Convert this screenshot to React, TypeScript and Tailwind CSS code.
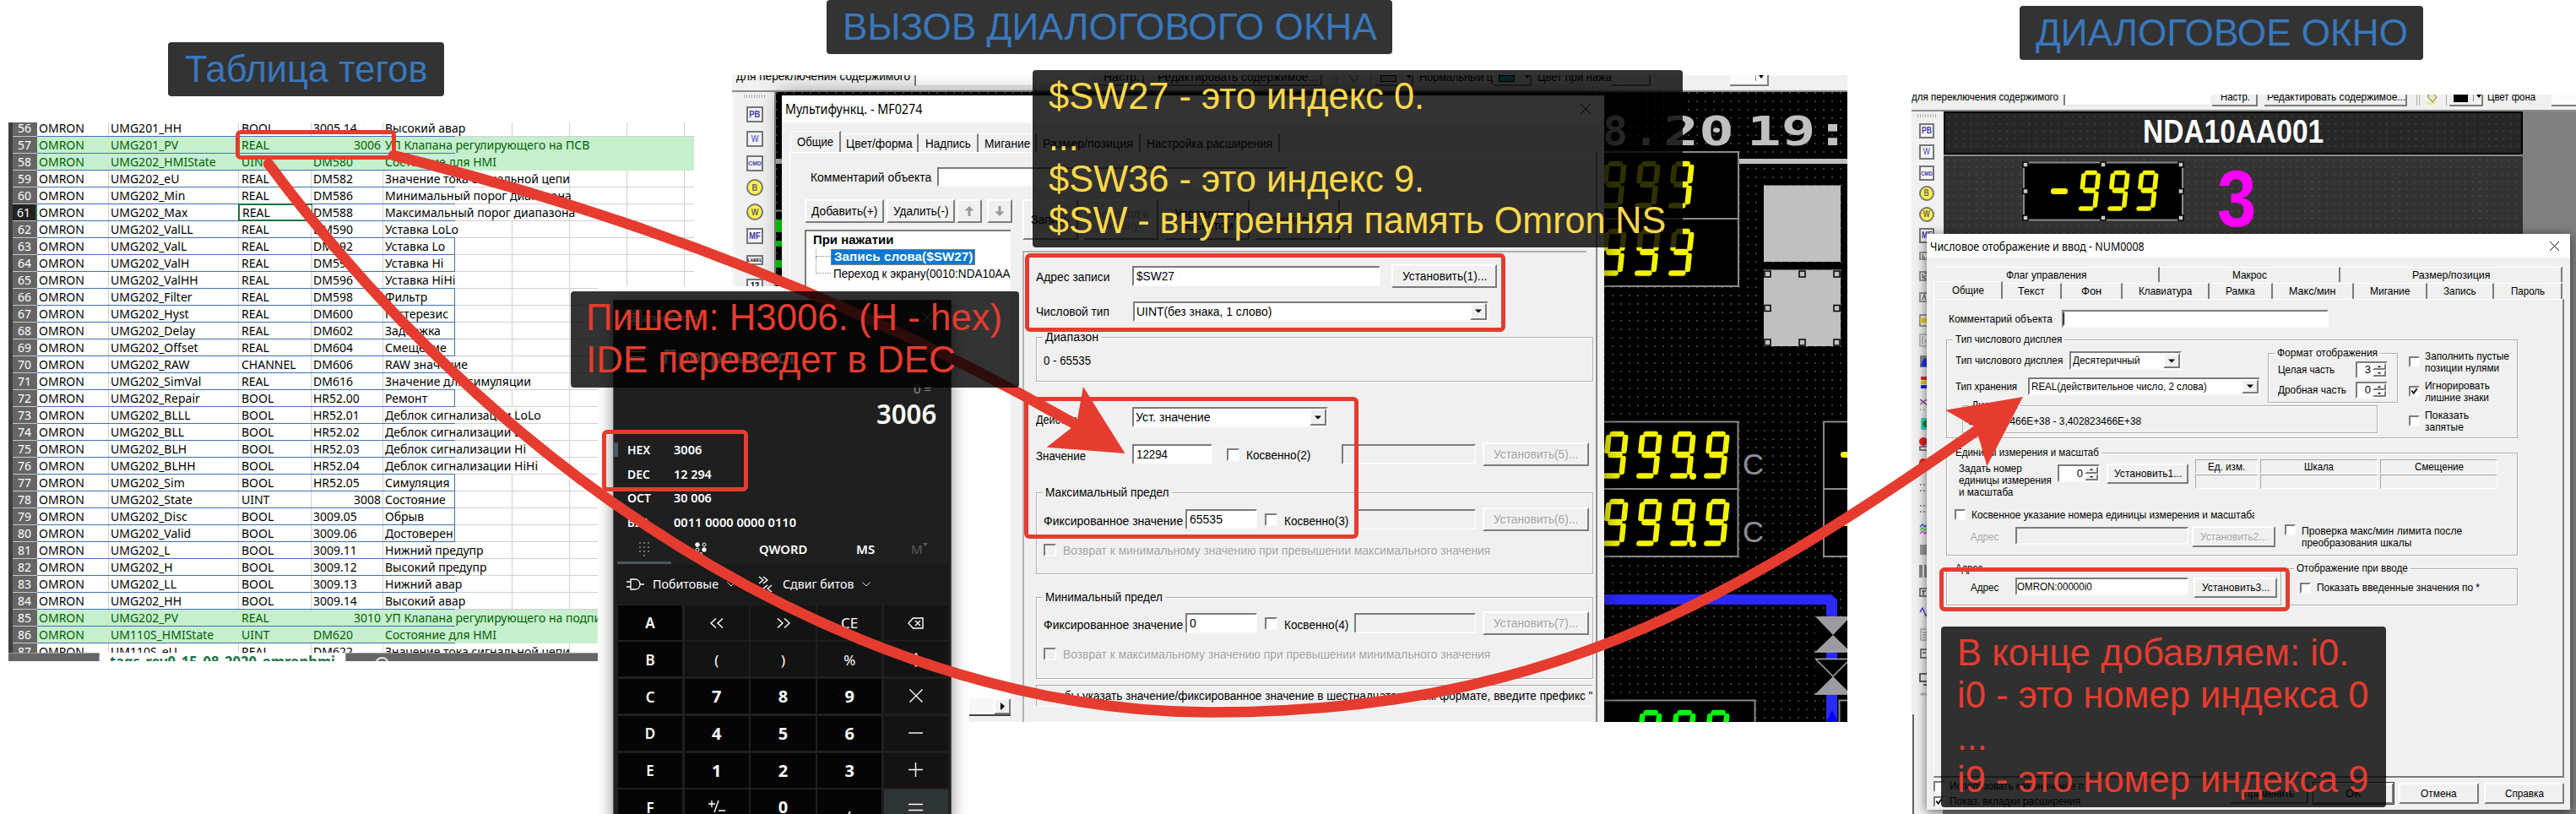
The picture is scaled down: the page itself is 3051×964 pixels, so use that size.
import React, { useLayoutEffect, useRef, useState } from "react";

const cx = (...a: (string | false | undefined)[]) => a.filter(Boolean).join(" ");

/* One line of text condensed or widened to the width of its box. */
function Fit({ c, children }: { c: string; children: React.ReactNode }) {
  const outer = useRef<HTMLSpanElement>(null);
  const inner = useRef<HTMLSpanElement>(null);
  const [k, setK] = useState(1);
  useLayoutEffect(() => {
    if (outer.current && inner.current && inner.current.offsetWidth > 0) {
      setK(outer.current.clientWidth / inner.current.offsetWidth);
    }
  }, []);
  return (
    <span ref={outer} className={cx("block shrink-0 whitespace-nowrap", c)}>
      <span ref={inner} className="inline-block origin-left" style={{ transform: `scaleX(${k})` }}>
        {children}
      </span>
    </span>
  );
}

const sunken =
  "border-2 border-t-[#7c7c7c] border-l-[#7c7c7c] border-r-[#fbfbfb] border-b-[#fbfbfb] shrink-0 flex items-center";
const raised =
  "border-2 border-t-white border-l-white border-r-[#7c7c7c] border-b-[#7c7c7c] bg-[#f0f0f0] shrink-0 flex items-center justify-center";
const disabledText = "text-[#a0a0a0] [text-shadow:1px_1px_0_#fff]";

function Field({ c, off, children }: { c: string; off?: boolean; children?: React.ReactNode }) {
  return <div className={cx(sunken, off ? "bg-[#f0f0f0]" : "bg-white", "pl-[3px]", c)}>{children}</div>;
}
function Btn({ c, off, children }: { c: string; off?: boolean; children?: React.ReactNode }) {
  return <div className={cx(raised, off && disabledText, c)}>{children}</div>;
}
function Select({ c, children }: { c: string; children?: React.ReactNode }) {
  return (
    <div className={cx(sunken, "justify-between bg-white pl-[2px]", c)}>
      {children}
      <div className={cx(raised, "h-full w-[20px]")}>
        <svg viewBox="0 0 8 4" className="h-[5px] w-[8px]"><path d="M0 0h8l-4 4z" fill="#000" /></svg>
      </div>
    </div>
  );
}
function Chk({ c, on, off }: { c: string; on?: boolean; off?: boolean }) {
  return (
    <div className={cx(sunken, "justify-center", off ? "bg-[#f0f0f0]" : "bg-white", c)}>
      {on && (
        <svg viewBox="0 0 10 10" className="size-full"><path d="M1.5 4l2.5 3.5L8.500 1.500" fill="none" stroke="#000" strokeWidth="2" /></svg>
      )}
    </div>
  );
}
function Group({ c, legend, children }: { c: string; legend: React.ReactNode; children?: React.ReactNode }) {
  return (
    <fieldset className={cx("shrink-0 border border-[#adadad] shadow-[inset_1px_1px_0_#fff,1px_1px_0_#fff]", c)}>
      <legend className="ml-[7px] h-[14px] px-[3px] leading-[14px]">{legend}</legend>
      {children}
    </fieldset>
  );
}
function Spin({ c, v }: { c: string; v: string }) {
  return (
    <div className={cx(sunken, "justify-end bg-white", c)}>
      <span className="mr-[2px]">{v}</span>
      <div className="flex h-full w-[16px] flex-col">
        <div className={cx(raised, "h-1/2 border")}><svg viewBox="0 0 4 2" className="h-[2px] w-[4px]"><path d="M0 2h4L2 0z" /></svg></div>
        <div className={cx(raised, "h-1/2 border")}><svg viewBox="0 0 4 2" className="h-[2px] w-[4px]"><path d="M0 0h4L2 2z" /></svg></div>
      </div>
    </div>
  );
}
function Note({ c, children }: { c: string; children: React.ReactNode }) {
  return <div className={cx("absolute rounded-[4px] bg-black/80 text-[45px]", c)}>{children}</div>;
}

/* ------------------------------------------------------------------ table */
type Row = [number, string, string, string, string];
const rows: Row[] = [
  [56, "UMG201_HH", "BOOL", "3005.14", "Высокий авар"],
  [57, "UMG201_PV", "REAL", "3006", "УП Клапана регулирующего на ПСВ"],
  [58, "UMG202_HMIState", "UINT", "DM580", "Состояние для HMI"],
  [59, "UMG202_eU", "REAL", "DM582", "Значение тока сигнальной цепи"],
  [60, "UMG202_Min", "REAL", "DM586", "Минимальный порог диапазона"],
  [61, "UMG202_Max", "REAL", "DM588", "Максимальный порог диапазона"],
  [62, "UMG202_ValLL", "REAL", "DM590", "Уставка LoLo"],
  [63, "UMG202_ValL", "REAL", "DM592", "Уставка Lo"],
  [64, "UMG202_ValH", "REAL", "DM594", "Уставка Hi"],
  [65, "UMG202_ValHH", "REAL", "DM596", "Уставка HiHi"],
  [66, "UMG202_Filter", "REAL", "DM598", "Фильтр"],
  [67, "UMG202_Hyst", "REAL", "DM600", "Гистерезис"],
  [68, "UMG202_Delay", "REAL", "DM602", "Задержка"],
  [69, "UMG202_Offset", "REAL", "DM604", "Смещение"],
  [70, "UMG202_RAW", "CHANNEL", "DM606", "RAW значение"],
  [71, "UMG202_SimVal", "REAL", "DM616", "Значение для симуляции"],
  [72, "UMG202_Repair", "BOOL", "HR52.00", "Ремонт"],
  [73, "UMG202_BLLL", "BOOL", "HR52.01", "Деблок сигнализации LoLo"],
  [74, "UMG202_BLL", "BOOL", "HR52.02", "Деблок сигнализации Lo"],
  [75, "UMG202_BLH", "BOOL", "HR52.03", "Деблок сигнализации Hi"],
  [76, "UMG202_BLHH", "BOOL", "HR52.04", "Деблок сигнализации HiHi"],
  [77, "UMG202_Sim", "BOOL", "HR52.05", "Симуляция"],
  [78, "UMG202_State", "UINT", "3008", "Состояние"],
  [79, "UMG202_Disc", "BOOL", "3009.05", "Обрыв"],
  [80, "UMG202_Valid", "BOOL", "3009.06", "Достоверен"],
  [81, "UMG202_L", "BOOL", "3009.11", "Нижний предупр"],
  [82, "UMG202_H", "BOOL", "3009.12", "Высокий предупр"],
  [83, "UMG202_LL", "BOOL", "3009.13", "Нижний авар"],
  [84, "UMG202_HH", "BOOL", "3009.14", "Высокий авар"],
  [85, "UMG202_PV", "REAL", "3010", "УП Клапана регулирующего на подпи"],
  [86, "UM110S_HMIState", "UINT", "DM620", "Состояние для HMI"],
  [87, "UM110S_eU", "REAL", "DM622", "Значение тока сигнальной цепи"],
];
const green = [57, 58, 85, 86];
const closed = [63, 64, 66, 67, 68, 69, 72, 77, 78, 79, 80];

function TagTable() {
  return (
    <div className="absolute left-[10px] top-[145px] isolate flex h-[638px] w-[812px] flex-col overflow-hidden bg-white font-['Noto_Sans',sans-serif] text-[14px] leading-[20px]">
      <div className="flex h-[628px] flex-col justify-start overflow-hidden">
        <div className="-mt-[3px]">
          {rows.map(([n, tag, type, addr, text]) => {
            const g = green.includes(n);
            const line = g ? "border-transparent" : "border-[#d0d0d0]";
            return (
              <div key={n} className={cx("flex h-[20px] whitespace-nowrap", g ? "text-[#006100]" : "text-black")}>
                <div className="w-[5px] shrink-0 bg-[#3f3f3f]" />
                <div className={cx("w-[29px] shrink-0 border-b border-[#c8c8c8] pr-px text-center text-white", n === 61 ? "border-r-2 border-r-[#1e7145] bg-[#222]" : "bg-[#666]")}>{n}</div>
                <div className={cx("flex w-[495px] shrink-0 border-b border-b-[#3f6fbf]", g && "bg-[#c6efce]", closed.includes(n) && "border-r border-r-[#3f6fbf]")}>
                  <div className={cx("w-[85px] shrink-0 border-r pl-[2px]", line)}>OMRON</div>
                  <div className={cx("w-[154px] shrink-0 border-r pl-[2px]", line)}>{tag}</div>
                  <div className={cx("w-[86px] shrink-0 border-r pl-[3px]", n === 61 ? "-mx-px -mt-px h-[21px] w-[88px] border-2 border-[#1e7145] leading-[18px]" : line)}>{type}</div>
                  <div className={cx("w-[85px] shrink-0 border-r", line, /^\d{4}$/.test(addr) ? "pr-[2px] text-right" : "pl-[2px]")}>{addr}</div>
                  <div className="w-[84px] shrink-0 pl-[2px]"><span className="relative z-10">{text}</span></div>
                </div>
                <div className={cx("flex flex-1", g ? "bg-[#c6efce]" : "border-b border-b-[#d0d0d0]")}>
                  <div className={cx("w-[68px] shrink-0", text.length < 19 && !g && "border-r border-r-[#d0d0d0]")} />
                  <div className={cx("w-[68px] shrink-0", !g && "border-r border-r-[#d0d0d0]")} />
                  <div className={cx("w-[68px] shrink-0", !g && "border-r border-r-[#d0d0d0]")} />
                  <div className={cx("w-[68px] shrink-0", !g && "border-r border-r-[#d0d0d0]")} />
                </div>
              </div>
            );
          })}
        </div>
      </div>
      <div className="flex h-[10px] overflow-hidden bg-[#666]">
        <div className="w-[108px] border-r border-t border-[#999]" />
        <div className="w-[291px] bg-white pl-[12px] text-[17px] font-bold leading-[21px] text-[#217346]">
          <Fit c="w-[267px]">tags_rev0_15_08_2020_omronhmi</Fit>
        </div>
        <div className="flex-1 border-l border-t border-[#999] pl-[34px] pt-[4px]">
          <div className="size-[17px] rounded-full border-2 border-[#e8e8e8]" />
        </div>
      </div>
    </div>
  );
}

/* ------------------------------------------------------------- calculator */
const keys = [
  "A", "<<", ">>", "CE", "del",
  "B", "(", ")", "%", "÷",
  "C", "7", "8", "9", "×",
  "D", "4", "5", "6", "−",
  "E", "1", "2", "3", "+",
  "F", "+/−", "0", ",", "=",
];
function KeyFace({ k }: { k: string }) {
  const s = { fill: "none", stroke: "#fff", strokeWidth: 1.4 };
  switch (k) {
    case "<<":
      return <svg className="h-[12px] w-[16px]" viewBox="0 0 16 12" {...s}><path d="M7 .5L1 6l6 5.500M15 .5L9 6l6 5.500" /></svg>;
    case ">>":
      return <svg className="h-[12px] w-[16px]" viewBox="0 0 16 12" {...s}><path d="M1 .5L7 6l-6 5.500M9 .5L15 6l-6 5.500" /></svg>;
    case "del":
      return <svg className="h-[14px] w-[19px]" viewBox="0 0 19 14" {...s}><path d="M6.500 1H18v12H6.500L1 7zM9 4l6 6M15 4l-6 6" /></svg>;
    case "÷":
      return <svg className="h-[17px] w-[18px]" viewBox="0 0 18 17" {...s}><path d="M0 8.500h18" /><circle cx="9" cy="2" r="1" fill="#fff" /><circle cx="9" cy="15" r="1" fill="#fff" /></svg>;
    case "×":
      return <svg className="mb-[3px] size-[16px]" viewBox="0 0 16 16" {...s}><path d="M.5.5l15 15M15.500.5l-15 15" /></svg>;
    case "−":
      return <svg className="mb-[2px] h-[2px] w-[17px]" viewBox="0 0 17 2" {...s}><path d="M0 1h17" /></svg>;
    case "+":
      return <svg className="mb-[3px] size-[17px]" viewBox="0 0 17 17" {...s}><path d="M0 8.500h17M8.500 0v17" /></svg>;
    case "+/−":
      return <svg className="mb-[2px] h-[16px] w-[20px]" viewBox="0 0 20 16" {...s}><path d="M0 5h8M4 1v8M12 1L7 15M12 13h8" /></svg>;
    case "=":
      return <svg className="h-[10px] w-[17px]" viewBox="0 0 17 10" {...s}><path d="M0 1.500h17M0 8.500h17" /></svg>;
    default:
      return <>{k}</>;
  }
}
const Chevron = () => (
  <svg className="h-[6px] w-[10px]" viewBox="0 0 10 6" fill="none" stroke="#ddd"><path d="M.5.5L5 5 9.500.5" /></svg>
);
function Calculator() {
  const bases = [["HEX", "3006", "w-[27px]", "w-[33px]"], ["DEC", "12 294", "w-[27px]", "w-[45px]"], ["OCT", "30 006", "w-[28px]", "w-[45px]"], ["BIN", "0011 0000 0000 0110", "w-[24px]", "w-[145px]"]];
  return (
    <div className="absolute left-[708px] top-[339px] h-[625px] w-[440px] overflow-hidden bg-white">
      <div className="ml-[18px] mt-[16px] h-[700px] w-[401px] border border-[#555] bg-[#1f1f1f] font-['Noto_Sans',sans-serif] text-[15px] leading-none text-white shadow-[0_4px_18px_rgba(0,0,0,0.45)]">
        <div className="flex h-[40px] items-center pl-[14px] pr-[22px] text-[13px]">
          <div className="flex size-[20px] items-center justify-center bg-[#777]">
            <svg className="size-[10px]" viewBox="0 0 10 10" fill="none" stroke="#fff"><path d="M.5.5h9v9h-9zM.5 4h9M5 4v5.500" /></svg>
          </div>
          <Fit c="w-[66px]">алькулятор</Fit>
          <div className="ml-auto mr-[46px] size-[10px] border border-[#ccc]" />
          <svg className="size-[12px]" viewBox="0 0 12 12" stroke="#ccc"><path d="M0 0l12 12M12 0L0 12" /></svg>
        </div>
        <div className="flex h-[52px] items-center pl-[14px] text-[24px] font-semibold">
          <div className="flex w-[22px] flex-col gap-[5px]"><div className="h-px bg-white" /><div className="h-px bg-white" /><div className="h-px bg-white" /></div>
          <Fit c="ml-[22px] w-[158px]">Программист</Fit>
        </div>
        <div className="flex h-[24px] items-center justify-end pr-[23px] text-[15px] text-[#8a8a8a]">0 =</div>
        <div className="flex h-[35px] items-center justify-end pr-[17px] text-[32px] font-semibold"><Fit c="w-[71px]">3006</Fit></div>
        <div className="mt-[11px] flex flex-col font-semibold">
          {bases.map(([n, v, a, b], i) => (
            <div key={n} className="flex h-[28.700px] items-center">
              <div className={cx("mr-[11px] h-[17px] w-[5px]", i === 0 && "bg-[#4c565c]")} />
              <div className="w-[55px]"><Fit c={a}>{n}</Fit></div>
              <Fit c={b}>{v}</Fit>
            </div>
          ))}
        </div>
        <div className="flex h-[35px] items-center pl-[4px] text-[15px] font-semibold">
          <div className="flex h-full w-[64px] items-center justify-center border-b-[3px] border-[#4b565c] pt-[2px]">
            <svg className="h-[18px] w-[14px]" viewBox="0 0 14 18" fill="#69747a">
              {[1, 6, 11].flatMap((y) => [1, 6, 11].map((x) => <rect key={`${x}-${y}`} x={x} y={y} width="2" height="2" />))}
              <rect x="6" y="16" width="2" height="2" />
            </svg>
          </div>
          <svg className="ml-[28px] h-[16px] w-[14px]" viewBox="0 0 14 16" fill="none" stroke="#fff">
            <circle cx="3" cy="3" r="2.300" fill="#fff" /><circle cx="11" cy="3" r="2" /><circle cx="3" cy="9" r="2" /><circle cx="11" cy="9" r="2.300" fill="#fff" /><circle cx="7" cy="14" r="1.500" />
          </svg>
          <Fit c="ml-[62px] w-[57px]">QWORD</Fit>
          <Fit c="ml-[58px] w-[22px]">MS</Fit>
          <span className="ml-[43px] flex items-start text-[15px] font-normal text-[#5c5c5c]">M<svg className="h-[4px] w-[6px]" viewBox="0 0 6 4" fill="#5c5c5c"><path d="M0 0h6L3 4z" /></svg></span>
        </div>
        <div className="mx-[3px] flex h-[48px] items-center bg-[#1a1a1a] pl-[12px] text-[15px]">
          <svg className="h-[14px] w-[21px]" viewBox="0 0 21 14" fill="none" stroke="#fff" strokeWidth="1.300"><path d="M5 1h5c4 0 6 3 6 6s-2 6-6 6H5zM0 4h5M0 10h5M16 7h5" /></svg>
          <Fit c="ml-[10px] w-[78px]">Побитовые</Fit>
          <span className="ml-[10px]"><Chevron /></span>
          <svg className="ml-[27px] h-[20px] w-[17px]" viewBox="0 0 17 20" fill="none" stroke="#fff" strokeWidth="1.300"><path d="M1 1l5 4-5 4M6 1l5 4-5 4M11 11l-5 4 5 4M16 11l-5 4 5 4" /></svg>
          <Fit c="ml-[12px] w-[84px]">Сдвиг битов</Fit>
          <span className="ml-[10px]"><Chevron /></span>
        </div>
        <div className="ml-[5px] mt-px grid w-[391px] grid-cols-5 gap-x-[2.600px] gap-y-[2.700px]">
          {keys.map((k) => (
            <div
              key={k}
              className={cx(
                "flex h-[41px] items-center justify-center pt-px",
                /^[A-F]$/.test(k) ? "bg-[#050505] text-[17px] font-semibold" : /^\d$/.test(k) ? "bg-[#050505] text-[20px] font-bold" : k === "=" ? "bg-[#2f3437]" : k === "," || k === "+/−" ? "bg-[#050505] text-[20px]" : "bg-[#131313] text-[17px]",
              )}
            >
              <KeyFace k={k} />
            </div>
          ))}
        </div>
      </div>
    </div>
  );
}

/* ---------------------------------------------------------- HMI drawings */
function Nine({ x, y, k = 1, color = "#f5f500" }: { x: number; y: number; k?: number; color?: string }) {
  return (
    <g transform={`translate(${x + 6 * k} ${y}) scale(${k}) skewX(-6)`} stroke={color} strokeWidth="6.500" strokeLinecap="round">
      <line x1="8" y1="4" x2="19" y2="4" />
      <line x1="4" y1="8" x2="4" y2="24" />
      <line x1="24" y1="8" x2="24" y2="24" />
      <line x1="9" y1="28.500" x2="19" y2="28.500" strokeWidth="7.500" />
      <line x1="24" y1="33" x2="24" y2="49" />
      <line x1="5" y1="53.500" x2="19" y2="53.500" />
    </g>
  );
}
function Handles({ x, y, w, h, s, fill }: { x: number; y: number; w: number; h: number; s: number; fill: string }) {
  const p = [[0, 0], [0.5, 0], [1, 0], [0, 0.5], [1, 0.5], [0, 1], [0.5, 1], [1, 1]];
  return (
    <g fill={fill} stroke="#000" strokeWidth="1.500">
      {p.map(([a, b]) => <rect key={`${a}-${b}`} x={x + a * (w - s)} y={y + b * (h - s)} width={s} height={s} />)}
    </g>
  );
}
function Screen() {
  return (
    <svg className="absolute inset-0 h-[746px] w-[1269px]" viewBox="919 109 1269 746">
      <g fill="#c0c0c0" fontFamily="DejaVu Sans Mono" fontWeight="bold" fontSize="48">
        <text x="1898" y="172" textLength="30" lengthAdjust="spacingAndGlyphs">8</text>
        <text x="1935" y="172">.</text>
        <text x="1970" y="172" textLength="84" lengthAdjust="spacingAndGlyphs">20</text>
        <text x="2069" y="172" textLength="122" lengthAdjust="spacingAndGlyphs">19:</text>
      </g>
      <rect x="919" y="188" width="7" height="6" fill="#c0c0c0" />
      <rect x="2059" y="188" width="129" height="6" fill="#c0c0c0" />
      <path d="M919 249.500h7" stroke="#999" strokeWidth="2" />
      <path d="M919 260h7v15h-7zM919 285h7v7h-7zM919 308h7v9h-7z" fill="#0d0" />
      <g fill="#000" stroke="#8a8a8a" strokeWidth="2">
        <path d="M1890 180h169v79h-169zM1890 259h169v80h-169z" />
        <path d="M1890 499.500h168.500v79.500h-168.500zM1890 579h168.500v80h-168.500z" />
        <path d="M2160 499.500h40v79.500h-40zM2160 579h40v80h-40z" />
      </g>
      {[1894, 1934, 1974].map((x) => <g key={x}><Nine x={x} y={190} /><Nine x={x} y={270} /></g>)}
      {[1896, 1936, 1976, 2016].map((x) => <g key={x}><Nine x={x} y={510} /><Nine x={x} y={590} /></g>)}
      <g fill="#f5f500"><circle cx="2005" cy="564" r="4" /><circle cx="2005" cy="644" r="4" /><rect x="2180" y="535" width="12" height="7" rx="3" /><rect x="2180" y="616" width="12" height="7" rx="3" /></g>
      <g fill="#8d8f96" fontFamily="Liberation Sans" fontSize="35">
        <text x="2064" y="562" textLength="25" lengthAdjust="spacingAndGlyphs">C</text>
        <text x="2064" y="642" textLength="25" lengthAdjust="spacingAndGlyphs">C</text>
      </g>
      <rect x="2089" y="219.500" width="91" height="90.500" fill="#c0c0c0" />
      <rect x="2089" y="319.500" width="91" height="90.500" fill="#c0c0c0" />
      <Handles x={2090} y={321} w={89} h={88} s={7} fill="#c0c0c0" />
      <path d="M1890 704h279l7 6v145h-13V716h-273z" fill="#2a2aff" />
      <path d="M2163 855l7-14 7 14z" fill="#00f" />
      <path d="M2150 730h42v42h-42z" fill="#000" />
      <path d="M2150 780h42v42h-42z" fill="#000" />
      <path d="M2150 730h42l-21 22 21 20h-42l21-20z" fill="#9b9ba0" />
      <path d="M2171 801l21 21h-42z" fill="#9b9ba0" />
      <path d="M2151 781l20 20 20-20" fill="none" stroke="#aaa" strokeWidth="1.500" />
      <path d="M2149 772h42M2149 822h42M2150 780.500h42" stroke="#aaa" strokeWidth="1.500" />
      <path d="M1890 829.500h188.500v40h-188.500zM2178.500 829.500h40v40h-40z" fill="#000" stroke="#8a8a8a" strokeWidth="2" />
      {[1936, 1976, 2016].map((x) => <Nine key={x} x={x} y={840} color="#0f0" />)}
    </svg>
  );
}

function ToolIcon({ t, c, round }: { t: string; c: string; round?: boolean }) {
  return (
    <div className={cx("flex shrink-0 items-center justify-center border-2 border-[#777] leading-none", round ? "rounded-full bg-[#fff34a] text-[#666]" : "bg-[#f4f4fb] text-[#3c3ca8]", c)}>
      <span className="scale-x-[0.85]">{t}</span>
    </div>
  );
}
const Grip = ({ c }: { c: string }) => (
  <div className={cx("shrink-0 bg-[repeating-linear-gradient(90deg,#aaa_0_1px,transparent_1px_3px)]", c)} />
);
const Bucket = ({ c }: { c: string }) => (
  <svg className={cx("shrink-0", c)} viewBox="0 0 16 16"><path d="M3 6l5-5 6 6-5 6z" fill="#e8e8b0" stroke="#666" /><path d="M2 13q6 4 10 0" stroke="#f3ee4a" strokeWidth="2" fill="none" /></svg>
);
const Down = () => <svg className="h-[4px] w-[6px]" viewBox="0 0 6 4"><path d="M0 0h6L3 4z" /></svg>;

function MultiTab({ c, t, w }: { c: string; t: string; w: string }) {
  return (
    <div className={cx("flex shrink-0 items-center justify-center border-r-2 border-t border-r-[#7c7c7c] border-t-white", c)}>
      <Fit c={w}>{t}</Fit>
    </div>
  );
}

function LimitGroup({ title, tw, value, n, b, note, c, pad }: { title: string; tw: string; value: string; n: string; b: string; note: string; c: string; pad: string }) {
  return (
    <Group c={cx("h-[104px] w-[660px]", c)} legend={<Fit c={tw}>{title}</Fit>}>
      <div className={cx("flex h-[28px] items-center pl-[8px]", pad)}>
        <Fit c="w-[165px] pt-[3px]">Фиксированное значение</Fit>
        <Field c="ml-[3px] h-[24px] w-[85px]">{value}</Field>
        <Chk c="ml-[9px] size-[15px]" />
        <Fit c="ml-[8px] w-[76px] pt-[3px]">{`Косвенно(${n})`}</Fit>
        <Field off c="ml-[7px] h-[24px] w-[144px]" />
        <Btn off c="ml-[8px] h-[28px] w-[126px]"><Fit c="w-[100px]">{`Установить(${b})...`}</Fit></Btn>
      </div>
      <div className={cx("mt-[15px] flex items-center pl-[8px]", disabledText)}>
        <Chk off c="size-[15px]" />
        <Fit c="ml-[8px] w-[506px] pt-px">{note}</Fit>
      </div>
    </Group>
  );
}

function MultiDialog() {
  return (
    <div className="absolute left-[7px] top-[4px] flex h-[760px] w-[974px] flex-col bg-[#f0f0f0] text-[14px] leading-[14px] shadow-[0_0_24px_rgba(0,0,0,0.5)]">
      <div className="flex h-[32px] shrink-0 items-center justify-between bg-white pl-[4px] pr-[16px] font-['Noto_Sans',sans-serif] text-[16px]">
        <Fit c="w-[162px]">Мультифункц. - MF0274</Fit>
        <svg className="size-[12px]" viewBox="0 0 12 12" stroke="#000"><path d="M0 0l12 12M12 0L0 12" /></svg>
      </div>
      <div className="ml-[10px] mt-[10px] flex h-[25px] shrink-0 items-end">
        <MultiTab c="h-[25px] w-[60px] border-l border-l-white" t="Общие" w="w-[43px]" />
        <MultiTab c="h-[22px] w-[92px]" t="Цвет/форма" w="w-[79px]" />
        <MultiTab c="h-[22px] w-[71px]" t="Надпись" w="w-[54px]" />
        <MultiTab c="h-[22px] w-[69px]" t="Мигание" w="w-[54px]" />
        <MultiTab c="h-[22px] w-[123px]" t="Размер/позиция" w="w-[107px]" />
        <MultiTab c="h-[22px] w-[165px]" t="Настройка расширения" w="w-[149px]" />
      </div>
      <div className="ml-[9px] w-[957px] flex-1 border-l border-r-2 border-t border-l-white border-r-[#8a8a8a] border-t-white">
        <div className="mt-[17px] flex h-[23px] items-center pl-[24px]">
          <Fit c="w-[143px]">Комментарий объекта</Fit>
          <Field c="ml-[7px] h-[23px] w-[415px]" />
        </div>
        <div className="mt-[15px] flex pl-[17px]">
          <div className="w-[247px] shrink-0">
            <div className="flex h-[28px]">
              <Btn c="w-[94px]"><Fit c="w-[78px]">Добавить(+)</Fit></Btn>
              <Btn c="ml-[3px] w-[81px]"><Fit c="w-[65px]">Удалить(-)</Fit></Btn>
              <Btn c="ml-[2px] w-[30px]"><svg className="size-[12px]" viewBox="0 0 12 12" fill="#999"><path d="M6 0l5.500 5.500H7.500V12h-3V5.500H.5z" /></svg></Btn>
              <Btn c="ml-[6px] w-[30px]"><svg className="size-[12px]" viewBox="0 0 12 12" fill="#999"><path d="M6 12L.5 6.500h4V0h3v6.500h4z" /></svg></Btn>
            </div>
            <div className="mt-[8px] flex h-[576px] w-[244px] flex-col border-l-2 border-t-2 border-[#7c7c7c] bg-white">
              <div className="mt-[3px] pl-[8px] font-bold"><Fit c="w-[95px]">При нажатии</Fit></div>
              <div className="ml-[11px] mt-[4px] flex h-[38px] w-[232px]">
                <div className="flex w-[18px] shrink-0 flex-col">
                  <div className="h-[9px] border-b border-l border-dotted border-[#888]" />
                  <div className="h-[20px] border-b border-l border-dotted border-[#888]" />
                </div>
                <div className="flex flex-col overflow-hidden">
                  <div className="flex h-[20px] w-[171px] items-center bg-[#0078d7] pl-[4px] font-bold text-white outline-1 -outline-offset-1 outline-dotted outline-[#ff8728]"><Fit c="w-[164px]">Запись слова($SW27)</Fit></div>
                  <div className="mt-[2px] flex h-[18px] items-center pl-[3px]"><Fit c="w-[210px]">Переход к экрану(0010:NDA10AA</Fit></div>
                </div>
              </div>
              <div className="mt-auto flex h-[21px] justify-end border-b-2 border-[#444] bg-[#f6f6f6]">
                <Btn c="h-[19px] w-[20px]"><svg className="h-[9px] w-[5px]" viewBox="0 0 5 9"><path d="M0 0v9l5-4.500z" /></svg></Btn>
              </div>
            </div>
          </div>
          <div className="ml-[11px] flex-1">
            <div className="flex h-[48px] text-center">
              <Btn c="w-[66px]">Запись</Btn>
              <Btn off c="ml-[6px] w-[89px]">Переход к<br />экрану</Btn>
              <Btn c="ml-[8px] w-[100px]">Управление<br />объектом</Btn>
              <Btn c="ml-[6px] w-[101px]"><Fit c="w-[82px]">Специальные</Fit></Btn>
            </div>
            <div className="mt-[13px] h-[600px] w-[670px] border-l-2 border-[#b4b4b4] pl-[14px]">
              <div className="-ml-[14px] h-[2px] w-[666px] bg-[#b0b0b0]" />
              <div className="mt-[13px] flex h-[29px] items-center">
                <Fit c="w-[87px] pt-[2px]">Адрес записи</Fit>
                <Field c="ml-[27px] h-[24px] w-[294px]"><Fit c="w-[45px]">$SW27</Fit></Field>
                <Btn c="ml-[13px] h-[28px] w-[125px]"><Fit c="w-[100px]">Установить(1)...</Fit></Btn>
              </div>
              <div className="mt-[15px] flex h-[25px] items-center">
                <Fit c="w-[87px]">Числовой тип</Fit>
                <Select c="ml-[28px] h-[24px] w-[421px]"><Fit c="w-[160px]">UINT(без знака, 1 слово)</Fit></Select>
              </div>
              <Group c="mt-[11px] h-[60px] w-[660px]" legend={<Fit c="w-[63px]">Диапазон</Fit>}>
                <div className="pl-[8px] pt-[14px]"><Fit c="w-[56px]">0 - 65535</Fit></div>
              </Group>
              <div className="mt-[30px] flex h-[24px] items-center">
                <Fit c="w-[56px] pt-[5px]">Действие</Fit>
                <Select c="ml-[58px] h-[24px] w-[232px]"><Fit c="w-[89px]">Уст. значение</Fit></Select>
              </div>
              <div className="mt-[18px] flex h-[28px] items-center">
                <Fit c="w-[59px] pt-[4px]">Значение</Fit>
                <Field c="ml-[55px] h-[24px] w-[95px]"><Fit c="w-[37px]">12294</Fit></Field>
                <Chk c="ml-[17px] size-[15px]" />
                <Fit c="ml-[8px] w-[76px] pt-px">Косвенно(2)</Fit>
                <Field off c="ml-[37px] h-[24px] w-[159px]" />
                <Btn off c="ml-[8px] h-[28px] w-[126px]"><Fit c="w-[100px]">Установить(5)...</Fit></Btn>
              </div>
              <LimitGroup c="mt-[24px]" pad="mt-[11px]" title="Максимальный предел" tw="w-[147px]" value="65535" n="3" b="6" note="Возврат к минимальному значению при превышении максимального значения" />
              <LimitGroup c="mt-[20px]" pad="mt-[10px]" title="Минимальный предел" tw="w-[139px]" value="0" n="4" b="7" note="Возврат к максимальному значению при превышении минимального значения" />
              <div className="mt-[7px] flex h-[26px] w-[660px] items-center overflow-hidden border border-[#b0b0b0] border-b-white border-r-transparent pl-[10px]">
                <Fit c="w-[648px]">Чтобы указать значение/фиксированное значение в шестнадцатеричном формате, введите префикс "</Fit>
              </div>
            </div>
          </div>
        </div>
      </div>
    </div>
  );
}

function CenterShot() {
  return (
    <div className="absolute left-[867px] top-[89px] flex h-[766px] w-[1321px] flex-col overflow-hidden bg-[#f0f0f0] text-[14px] leading-[14px]">
      <div className="flex h-[20px] shrink-0 overflow-hidden border-b-2 border-[#8a8a8a]">
        <Fit c="-mt-[6px] ml-[5px] w-[206px]">для переключения содержимого</Fit>
        <div className="ml-[5px] h-[13px] w-[210px] border-b border-l-2 border-b-[#ddd] border-l-[#7c7c7c] bg-white" />
        <div className="ml-[4px] h-[13px] w-[58px] border-b-2 border-r-2 border-[#7c7c7c] pl-[10px]"><Fit c="-mt-[5px] w-[43px]">Настр.</Fit></div>
        <div className="ml-[8px] h-[13px] w-[203px] border-b-2 border-r-2 border-[#7c7c7c] pl-[8px]"><Fit c="-mt-[5px] w-[190px]">Редактировать содержимое...</Fit></div>
        <Grip c="ml-[14px] h-[13px] w-[4px]" />
        <Bucket c="-mt-[5px] ml-[11px] size-[16px]" />
        <div className="ml-[12px] h-[13px] w-px bg-[#aaa]" />
        <div className="ml-[5px] flex h-[13px] w-[45px] border-b-2 border-r-2 border-[#7c7c7c] pl-[6px]"><div className="mr-[12px] h-[8px] w-[20px] border border-black bg-[#c0c0c0]" /><Down /></div>
        <Fit c="-mt-[5px] ml-[7px] w-[87px]">Нормальный ц</Fit>
        <div className="ml-[1px] flex h-[13px] w-[45px] border-b-2 border-r-2 border-[#7c7c7c] pl-[6px]"><div className="mr-[12px] h-[8px] w-[20px] border border-black bg-[#00c0c0]" /><Down /></div>
        <Fit c="-mt-[5px] ml-[7px] w-[88px]">Цвет при нажа</Fit>
        <div className="h-[13px] w-[46px] border-b-2 border-r-2 border-[#7c7c7c]" />
        <div className="ml-[94px] flex h-[13px] w-[46px] justify-end border-b-2 border-r-2 border-[#7c7c7c] bg-[#fbfbfb] pr-[4px]"><div className="mr-[3px] h-[7px] w-px bg-[#888]" /><Down /></div>
      </div>
      <div className="flex flex-1">
        <div className="flex w-[52px] shrink-0 flex-col items-center border-l-4 border-r-2 border-l-[#f6f6f6] border-r-[#8a8a8a] text-[11px] font-bold">
          <Grip c="mt-[3px] h-[4px] w-[26px]" />
          <ToolIcon t="PB" c="mt-[10px] h-[19px] w-[20px]" />
          <ToolIcon t="W" c="mt-[10px] h-[19px] w-[20px] font-normal" />
          <ToolIcon t="CMD" c="mt-[10px] h-[19px] w-[20px] text-[8px]" />
          <ToolIcon t="B" round c="mt-[9px] size-[20px]" />
          <ToolIcon t="W" round c="mt-[9px] size-[20px]" />
          <ToolIcon t="MF" c="mt-[9px] h-[19px] w-[20px]" />
          <ToolIcon t="LABEL" c="mt-[13px] h-[12px] w-[20px] text-[6px] !text-black" />
          <ToolIcon t="12" c="mt-[16px] h-[16px] w-[20px] !text-black" />
        </div>
        <div className="relative h-[746px] w-[1269px] bg-black bg-[radial-gradient(circle,#808080_0.5px,transparent_0.9px)] bg-[length:10px_10px] bg-[position:-4px_-4px]">
          <Screen />
          <MultiDialog />
        </div>
      </div>
    </div>
  );
}

/* --------------------------------------------------------- right capture */
function NumDialog() {
  const tab = "flex shrink-0 items-center justify-center border-r-2 border-t border-r-[#7c7c7c] border-t-white";
  const cell = "border border-[#a8a8a8] border-b-white border-r-white flex items-center justify-center";
  return (
    <div className="absolute left-[18px] top-[165px] flex h-[682px] w-[762px] flex-col bg-[#f0f0f0] text-[13px] leading-[14px] shadow-[0_2px_12px_rgba(0,0,0,0.6)]">
      <div className="flex h-[28px] shrink-0 items-center justify-between bg-white pl-[4px] pr-[13px] font-['Noto_Sans',sans-serif] text-[15px]">
        <Fit c="w-[254px]">Числовое отображение и ввод - NUM0008</Fit>
        <svg className="size-[11px]" viewBox="0 0 12 12" stroke="#000"><path d="M0 0l12 12M12 0L0 12" /></svg>
      </div>
      <div className="ml-[10px] mt-[11px] flex h-[18px] shrink-0">
        <div className={cx(tab, "w-[266px]")}><Fit c="w-[96px]">Флаг управления</Fit></div>
        <div className={cx(tab, "w-[214px]")}><Fit c="w-[41px]">Макрос</Fit></div>
        <div className={cx(tab, "w-[263px]")}><Fit c="w-[92px]">Размер/позиция</Fit></div>
      </div>
      <div className="-mt-px ml-[8px] flex h-[21px] shrink-0 items-end">
        <div className={cx(tab, "h-[21px] w-[82px] border-l border-l-white")}><Fit c="w-[38px]">Общие</Fit></div>
        <div className={cx(tab, "h-[19px] w-[70px]")}><Fit c="w-[32px]">Текст</Fit></div>
        <div className={cx(tab, "h-[19px] w-[72px]")}><Fit c="w-[24px]">Фон</Fit></div>
        <div className={cx(tab, "h-[19px] w-[103px]")}><Fit c="w-[63px]">Клавиатура</Fit></div>
        <div className={cx(tab, "h-[19px] w-[75px]")}><Fit c="w-[35px]">Рамка</Fit></div>
        <div className={cx(tab, "h-[19px] w-[96px]")}><Fit c="w-[56px]">Макс/мин</Fit></div>
        <div className={cx(tab, "h-[19px] w-[87px]")}><Fit c="w-[47px]">Мигание</Fit></div>
        <div className={cx(tab, "h-[19px] w-[79px]")}><Fit c="w-[39px]">Запись</Fit></div>
        <div className={cx(tab, "h-[19px] w-[81px]")}><Fit c="w-[40px]">Пароль</Fit></div>
      </div>
      <div className="ml-[8px] flex h-[567px] w-[747px] shrink-0 flex-col border border-b-2 border-r-2 border-b-[#7c7c7c] border-l-white border-r-[#7c7c7c] border-t-white">
        <div className="mt-[12px] flex h-[21px] shrink-0 items-center pl-[17px]">
          <Fit c="w-[123px] pt-px">Комментарий объекта</Fit>
          <Field c="ml-[11px] h-[21px] w-[316px] !pl-0"><div className="h-[15px] w-px bg-black" /></Field>
        </div>
        <Group c="ml-[14px] mt-[7px] h-[124px] w-[677px]" legend={<Fit c="w-[126px]">Тип числового дисплея</Fit>}>
          <div className="flex">
            <div className="w-[537px] shrink-0">
              <div className="flex">
                <div className="w-[380px] shrink-0 pl-[10px] pt-[7px]">
                  <div className="flex h-[22px] items-center">
                    <Fit c="w-[127px]">Тип числового дисплея</Fit>
                    <Select c="ml-[8px] h-[22px] w-[133px]"><Fit c="w-[80px]">Десятеричный</Fit></Select>
                  </div>
                  <div className="mt-[9px] flex h-[21px] items-center">
                    <Fit c="w-[73px]">Тип хранения</Fit>
                    <Select c="ml-[13px] h-[21px] w-[275px]"><Fit c="w-[208px]">REAL(действительное число, 2 слова)</Fit></Select>
                  </div>
                </div>
                <Group c="mt-[2px] h-[66px] w-[154px]" legend={<Fit c="w-[119px]">Формат отображения</Fit>}>
                  <div className="mt-[3px] flex items-center pl-[11px]"><Fit c="w-[67px]">Целая часть</Fit><Spin c="ml-[25px] h-[20px] w-[38px]" v="3" /></div>
                  <div className="mt-[4px] flex items-center pl-[11px]"><Fit c="w-[81px]">Дробная часть</Fit><Spin c="ml-[11px] h-[20px] w-[38px]" v="0" /></div>
                </Group>
              </div>
              <Group c="-mt-[4px] ml-[18px] h-[40px] w-[492px]" legend={<Fit c="w-[55px]">Диапазон</Fit>}>
                <div className="pl-[2px] pt-[5px]"><Fit c="w-[209px]">-3,402823466E+38 - 3,402823466E+38</Fit></div>
              </Group>
            </div>
            <div className="ml-[10px] mt-[6px] flex flex-col gap-[6px]">
              <div className="flex h-[29px]"><Chk c="mt-[7px] size-[13px]" /><div className="ml-[6px]"><Fit c="w-[100px]">Заполнить пустые</Fit><Fit c="w-[88px]">позиции нулями</Fit></div></div>
              <div className="flex h-[29px]"><Chk on c="mt-[7px] size-[13px]" /><div className="ml-[6px]"><Fit c="w-[77px]">Игнорировать</Fit><Fit c="w-[76px]">лишние знаки</Fit></div></div>
              <div className="flex h-[29px]"><Chk c="mt-[7px] size-[13px]" /><div className="ml-[6px]"><Fit c="w-[52px]">Показать</Fit><Fit c="w-[46px]">запятые</Fit></div></div>
            </div>
          </div>
        </Group>
        <Group c="ml-[14px] mt-[10px] h-[129px] w-[677px]" legend={<Fit c="w-[170px]">Единицы измерения и масштаб</Fit>}>
          <div className="flex h-[52px] items-start pl-[14px]">
            <div className="mt-[5px] w-[117px]"><Fit c="w-[75px]">Задать номер</Fit><Fit c="w-[110px]">единицы измерения</Fit><Fit c="w-[64px]">и масштаба</Fit></div>
            <Spin c="mt-[7px] h-[21px] w-[50px]" v="0" />
            <Btn c="ml-[8px] mt-[6px] h-[24px] w-[97px]"><Fit c="w-[80px]">Установить1...</Fit></Btn>
            <div className="ml-[8px] mt-px grid grid-cols-[74px_139px_139px] grid-rows-[17px_17px] gap-x-[3px] gap-y-[1px]">
              <div className={cell}><Fit c="w-[44px]">Ед. изм.</Fit></div>
              <div className={cell}><Fit c="w-[35px]">Шкала</Fit></div>
              <div className={cell}><Fit c="w-[58px]">Смещение</Fit></div>
              <div className={cell} /><div className={cell} /><div className={cell} />
            </div>
          </div>
          <div className="mt-[7px] flex h-[15px] items-center pl-[9px]"><Chk c="size-[13px]" /><div className="ml-[7px] w-[335px] overflow-hidden"><Fit c="w-[338px]">Косвенное указание номера единицы измерения и масштаба</Fit></div></div>
          <div className="mt-[4px] flex items-start pl-[28px]">
            <div className={cx("pt-[8px]", disabledText)}><Fit c="w-[33px]">Адрес</Fit></div>
            <Field off c="ml-[20px] mt-[3px] h-[21px] w-[205px]" />
            <Btn off c="ml-[4px] mt-[2px] h-[25px] w-[99px]"><Fit c="w-[79px]">Установить2...</Fit></Btn>
            <Chk c="ml-[11px] size-[13px]" />
            <div className="ml-[7px] mt-px"><Fit c="w-[190px]">Проверка макс/мин лимита после</Fit><Fit c="w-[130px]">преобразования шкалы</Fit></div>
          </div>
        </Group>
        <div className="ml-[14px] mt-[8px] flex shrink-0 gap-[7px]">
          <Group c="h-[51px] w-[397px]" legend={<Fit c="w-[32px]">Адрес</Fit>}>
            <div className="mt-[4px] flex h-[24px] items-center pl-[28px]">
              <Fit c="w-[33px]">Адрес</Fit>
              <Field c="mb-[3px] ml-[20px] h-[21px] w-[205px] !pl-0"><Fit c="w-[89px]">OMRON:00000i0</Fit></Field>
              <Btn c="ml-[6px] h-[24px] w-[99px]"><Fit c="w-[80px]">Установить3...</Fit></Btn>
            </div>
          </Group>
          <Group c="h-[51px] w-[273px]" legend={<Fit c="w-[132px]">Отображение при вводе</Fit>}>
            <div className="mt-[8px] flex h-[16px] items-center pl-[14px]"><Chk c="size-[13px]" /><Fit c="ml-[7px] w-[193px]">Показать введенные значения по *</Fit></div>
          </Group>
        </div>
      </div>
      <div className="ml-[8px] mt-[3px] flex">
        <div className="flex w-[350px] shrink-0 flex-col gap-[4px]">
          <div className="flex items-center"><Chk c="size-[13px]" /><Fit c="ml-[6px] w-[159px]">Использовать как значение п</Fit></div>
          <div className="flex items-center"><Chk on c="size-[13px]" /><Fit c="ml-[6px] w-[155px]">Показ. вкладки расширения</Fit></div>
        </div>
        <div className="mt-[3px] flex h-[25px] gap-[6px]">
          <Btn c="w-[94px]"><Fit c="w-[60px]">Применить</Fit></Btn>
          <Btn c="w-[95px] outline-1 outline-[#444]">OK</Btn>
          <Btn c="w-[95px]"><Fit c="w-[43px]">Отмена</Fit></Btn>
          <Btn c="w-[95px]"><Fit c="w-[46px]">Справка</Fit></Btn>
        </div>
      </div>
    </div>
  );
}

function RightShot() {
  return (
    <div className="absolute left-[2264px] top-[112px] flex h-[852px] w-[787px] flex-col overflow-hidden bg-[#f0f0f0] text-[13px] leading-[14px]">
      <div className="flex h-[20px] shrink-0 overflow-hidden border-b-2 border-[#8a8a8a]">
        <Fit c="-mt-[4px] w-[174px]">для переключения содержимого</Fit>
        <div className="ml-[6px] h-[13px] w-[178px] border-b border-l-2 border-b-[#ddd] border-l-[#7c7c7c] bg-white" />
        <div className="ml-[2px] h-[14px] w-[55px] border-b-2 border-r-2 border-[#7c7c7c] pl-[10px]"><Fit c="-mt-[4px] w-[35px]">Настр.</Fit></div>
        <div className="ml-[8px] h-[14px] w-[172px] border-b-2 border-r-2 border-[#7c7c7c] pl-[3px]"><Fit c="-mt-[4px] w-[164px]">Редактировать содержимое...</Fit></div>
        <Grip c="ml-[11px] h-[13px] w-[4px]" />
        <Bucket c="-mt-[4px] ml-[6px] size-[16px]" />
        <div className="ml-[9px] h-[13px] w-px bg-[#aaa]" />
        <div className="ml-[3px] flex h-[14px] w-[40px] border-b-2 border-r-2 border-[#7c7c7c] pl-[5px]"><div className="mr-[6px] h-[9px] w-[17px] bg-black" /><div className="mr-[3px] h-[8px] w-px bg-[#888]" /><Down /></div>
        <Fit c="-mt-[4px] ml-[5px] w-[57px]">Цвет фона</Fit>
        <div className="ml-[19px] h-[14px] w-[30px] border-b-2 border-[#7c7c7c] bg-[#fbfbfb]" />
      </div>
      <div className="flex h-[827px] shrink-0 bg-[#808080]">
        <div className="flex w-[38px] shrink-0 flex-col bg-[#f0f0f0] pl-[9px] text-[10px] font-bold">
          <Grip c="-ml-[2px] mt-[3px] h-[4px] w-[22px]" />
          <ToolIcon t="PB" c="mt-[7px] size-[18px]" />
          <ToolIcon t="W" c="mt-[7px] size-[18px] font-normal" />
          <ToolIcon t="CMD" c="mt-[7px] size-[18px] text-[7px]" />
          <ToolIcon t="B" round c="mt-[6px] size-[18px]" />
          <ToolIcon t="W" round c="mt-[7px] size-[18px]" />
          <ToolIcon t="MF" c="mt-[7px] size-[18px]" />
          <svg className="mt-[9px] h-[530px] w-[18px] shrink-0" viewBox="0 0 18 530" fill="none" stroke="#777" strokeWidth="1.500">
            <path d="M1 2h20v8H1zM4 4v4h3M1 25h20v10H1zM4 27v6M6 27h4v3H6v3h4" />
            <path d="M1 50h20v10H1zM4 58l2-6 2 6" />
            <rect x="1" y="76" width="20" height="13" /><path d="M1 81h20M1 84h20" stroke="#e0d030" strokeWidth="3" />
            <path d="M1 99h20v14H1zM4 101v10M8 105v4" stroke="#aaa" />
            <rect x="1" y="124" width="20" height="14" fill="#888" stroke="none" /><path d="M2 137q3-14 8-8v8z" fill="#1a3af0" stroke="none" />
            <path d="M2 149h8v4H2z" fill="#e22" stroke="none" /><path d="M2 154h8v4H2z" fill="#ec0" stroke="none" /><path d="M2 159h8v4H2z" fill="#22d" stroke="none" />
            <path d="M1 182l5-4 5-3" stroke="#e44" /><path d="M1 176l5 4 4 3" stroke="#44d" /><path d="M1 188h10" strokeDasharray="1 3" />
            <rect x="2" y="198" width="9" height="14" fill="#3cd8c8" stroke="none" /><circle cx="8" cy="205" r="4" fill="#2a8a2a" stroke="none" />
            <circle cx="5" cy="226" r="5" fill="#d22" stroke="none" /><path d="M1 232h12v4H1z" stroke="#555" />
            <circle cx="5" cy="251" r="5" fill="#d22" stroke="none" />
            <path d="M1 277h10M1 284h10M1 302h10M1 309h10" strokeDasharray="2 2" />
            <path d="M1 327l3-3 3 3 3-3" stroke="#44d" /><path d="M1 331l3-3 3 3 3-3" stroke="#3c3" /><path d="M1 335l3-3 3 3 3-3" stroke="#c4c" />
            <path d="M1 348h10v12H1z" fill="#999" stroke="none" /><path d="M0 372h4v15H0zM6 372h4v15H6z" fill="#888" stroke="none" />
            <path d="M1 400h12v9H1zM3 403h5M5 403v5" stroke="#555" />
            <path d="M1 428l3-5 4 9 3-4" stroke="#4a4ad0" />
            <path d="M2 448h10v13H2zM4 452h6M4 455h6M4 458h6" stroke="#aaa" />
            <path d="M2 472h6l4 4v6H2zM4 476h4" stroke="#555" />
            <path d="M1 501h12v9H1zM5 514h6" stroke="#333" />
            <path d="M4 527v-4M9 527v-4M1 525h10" stroke="#aaa" />
          </svg>
        </div>
        <div className="flex h-[300px] w-[686px] shrink-0 flex-col">
          <div className="flex h-[51px] items-center justify-center border-2 border-black bg-[#262626] bg-[radial-gradient(circle,#666_0.6px,transparent_1px)] bg-[length:8.650px_8.650px] pb-[4px] text-[39px] font-bold leading-none text-white">
            <Fit c="w-[214px]">NDA10AA001</Fit>
          </div>
          <div className="h-[2px] bg-[#8a8a8a]" />
          <div className="relative flex-1 bg-[#333] bg-[radial-gradient(circle,#6a6a6a_0.6px,transparent_1px)] bg-[length:8.650px_8.650px]">
            <svg className="absolute left-[92px] top-[5px] h-[73px] w-[194px]" viewBox="2394 190 194 73">
              <rect x="2397" y="192.500" width="188" height="68" fill="#000" stroke="#8a8a8a" strokeWidth="2" />
              <rect x="2429" y="223" width="20" height="7" rx="3" fill="#f5f500" />
              <Nine x={2460} y={201} k={0.86} /><Nine x={2494.5} y={201} k={0.86} /><Nine x={2528.5} y={201} k={0.86} />
              <Handles x={2396} y={192} w={190} h={69} s={6} fill="#c8c8c8" />
            </svg>
            <div className="absolute left-[324px] top-[6px] text-[94px] font-bold leading-[90px] text-[#f0f]"><Fit c="w-[46px]">3</Fit></div>
          </div>
        </div>
      </div>
      <div className="flex h-[5px] bg-[#787878]"><div className="w-[37px] bg-[#f0f0f0]" /></div>
      <div className="absolute left-px top-[734px] h-[118px] w-[2px] bg-[#666]" />
      <NumDialog />
    </div>
  );
}

/* ------------------------------------------------------------------ page */
export default function App() {
  const box = "absolute rounded-[6px] border-[5px] border-[#e53c2f]";
  return (
    <div className="relative h-[964px] w-[3051px] overflow-hidden bg-white font-['Liberation_Sans',Arial,sans-serif] text-black">
      <TagTable />
      <CenterShot />
      <Calculator />
      <RightShot />

      <div className={cx(box, "left-[279px] top-[154px] h-[35px] w-[190px]")} />
      <div className={cx(box, "left-[713px] top-[509px] h-[73px] w-[173px]")} />
      <div className={cx(box, "left-[1214px] top-[300px] h-[93px] w-[569px]")} />
      <div className={cx(box, "left-[1213px] top-[470px] h-[168px] w-[396px]")} />
      <div className={cx(box, "left-[2297px] top-[672px] h-[52px] w-[415px]")} />
      <svg className="absolute inset-0 h-[964px] w-[3051px]" viewBox="0 0 3051 964" fill="none" stroke="#e53c2f" strokeWidth="12.500">
        <path d="M466 184Q910 294 1280 506" strokeLinecap="round" />
        <path d="M1332.500 537L1283 458 1275 502 1239.600 529.700z" fill="#e53c2f" stroke="none" />
        <path d="M318 194C617 597 1045 843.500 1433 843.500S2040 720 2344 508" strokeLinecap="round" />
        <path d="M2396 470L2304 485.700 2340 506 2353.400 552z" fill="#e53c2f" stroke="none" />
      </svg>

      <Note c="left-[199px] top-[50px] h-[64px] w-[327px] pl-[20px] leading-[64px] text-[#3878be]"><Fit c="w-[287px]">Таблица тегов</Fit></Note>
      <Note c="left-[979px] top-0 h-[64px] w-[670px] pl-[19px] leading-[64px] text-[#3878be]"><Fit c="w-[633px]">ВЫЗОВ ДИАЛОГОВОГО ОКНА</Fit></Note>
      <Note c="left-[2392px] top-[7px] h-[64px] w-[478px] pl-[19px] leading-[64px] text-[#3878be]"><Fit c="w-[441px]">ДИАЛОГОВОЕ ОКНО</Fit></Note>
      <Note c="left-[1223px] top-[83px] h-[210px] w-[770px] pl-[19px] pt-[6px] leading-[49px] text-[#ffd84a]">
        <Fit c="h-[49px] w-[445px]">$SW27 - это индекс 0.</Fit>
        <Fit c="h-[49px] w-[36px]">...</Fit>
        <Fit c="h-[49px] w-[445px]">$SW36 - это индекс 9.</Fit>
        <Fit c="h-[49px] w-[731px]">$SW - внутренняя память Omron NS</Fit>
      </Note>
      <Note c="left-[676px] top-[345px] h-[114px] w-[531px] pl-[18px] pt-[6px] leading-[50px] text-[#e53c2f]">
        <Fit c="h-[50px] w-[493px]">Пишем: H3006. (H - hex)</Fit>
        <Fit c="h-[50px] w-[438px]">IDE переведет в DEC</Fit>
      </Note>
      <Note c="left-[2299px] top-[742px] h-[214px] w-[527px] pl-[19px] pt-[6px] leading-[50px] text-[#e53c2f]">
        <Fit c="h-[50px] w-[464px]">В конце добавляем: i0.</Fit>
        <Fit c="h-[50px] w-[488px]">i0 - это номер индекса 0</Fit>
        <Fit c="h-[50px] w-[36px]">...</Fit>
        <Fit c="h-[50px] w-[488px]">i9 - это номер индекса 9</Fit>
      </Note>
    </div>
  );
}
